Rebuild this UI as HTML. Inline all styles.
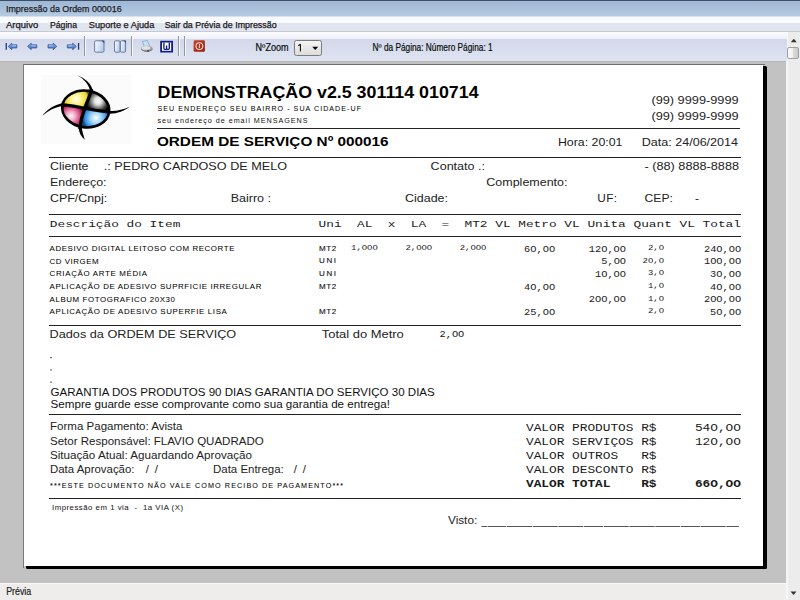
<!DOCTYPE html><html><head><meta charset="utf-8"><title>Impressão da Ordem 000016</title>
<style>html,body{margin:0;padding:0;width:800px;height:600px;overflow:hidden;background:#c0c0c0}svg{display:block}text{white-space:pre}</style></head><body>
<svg width="800" height="600" viewBox="0 0 800 600">
<defs>
<linearGradient id="gTitle" x1="0" y1="0" x2="0" y2="1"><stop offset="0" stop-color="#9db6d2"/><stop offset="1" stop-color="#b5cbe2"/></linearGradient>
<linearGradient id="gToolTop" x1="0" y1="0" x2="0" y2="1"><stop offset="0" stop-color="#fdfdfe"/><stop offset="1" stop-color="#eef0f8"/></linearGradient>
<linearGradient id="gMenu" x1="0" y1="0" x2="0" y2="1"><stop offset="0" stop-color="#fbfcfe"/><stop offset="1" stop-color="#e8edf5"/></linearGradient>
<linearGradient id="gTool" x1="0" y1="0" x2="0" y2="1"><stop offset="0" stop-color="#d2d8ea"/><stop offset="1" stop-color="#dfe4f2"/></linearGradient>
<linearGradient id="gThumb" x1="0" y1="0" x2="1" y2="0"><stop offset="0" stop-color="#fbfbfb"/><stop offset="0.45" stop-color="#f0f0f0"/><stop offset="0.55" stop-color="#dadada"/><stop offset="1" stop-color="#c8c8c8"/></linearGradient>
<linearGradient id="gCombo" x1="0" y1="0" x2="0" y2="1"><stop offset="0" stop-color="#f6f6f6"/><stop offset="1" stop-color="#dcdcdc"/></linearGradient>
<linearGradient id="gArrow" x1="0" y1="0" x2="0" y2="1"><stop offset="0" stop-color="#8fb5ea"/><stop offset="1" stop-color="#3c68b8"/></linearGradient>
<linearGradient id="gPage" x1="0" y1="0" x2="1" y2="1"><stop offset="0" stop-color="#ffffff"/><stop offset="1" stop-color="#c9dcf4"/></linearGradient>
<linearGradient id="gRed" x1="0" y1="0" x2="1" y2="1"><stop offset="0" stop-color="#d0462c"/><stop offset="1" stop-color="#8e1c0e"/></linearGradient>
<linearGradient id="gPage2" x1="0" y1="0" x2="1" y2="0.3"><stop offset="0" stop-color="#ffffff"/><stop offset="1" stop-color="#b3cdef"/></linearGradient>
</defs>
<rect x="0" y="0" width="800" height="16" fill="url(#gTitle)"/>
<rect x="0" y="0" width="800" height="1" fill="#3e4e66"/>
<rect x="0" y="16" width="800" height="1" fill="#d8e2ee"/>
<text x="6.00" y="12.00" font-family="Liberation Sans" font-size="9.3" font-weight="normal" fill="#18202e" textLength="115.60" lengthAdjust="spacingAndGlyphs" stroke="#222" stroke-width="0.25">Impressão da Ordem 000016</text>
<rect x="0" y="17" width="800" height="6" fill="#f9fafd"/>
<rect x="0" y="23" width="800" height="8" fill="#e1e5f0"/>
<rect x="0" y="31" width="800" height="1" fill="#c4c9d4"/>
<text x="6.00" y="28.00" font-family="Liberation Sans" font-size="9.0" font-weight="normal" fill="#151515" textLength="32.20" lengthAdjust="spacingAndGlyphs" stroke="#222" stroke-width="0.25">Arquivo</text>
<text x="50.00" y="28.00" font-family="Liberation Sans" font-size="9.0" font-weight="normal" fill="#151515" textLength="27.00" lengthAdjust="spacingAndGlyphs" stroke="#222" stroke-width="0.25">Página</text>
<text x="88.80" y="28.00" font-family="Liberation Sans" font-size="9.0" font-weight="normal" fill="#151515" textLength="65.50" lengthAdjust="spacingAndGlyphs" stroke="#222" stroke-width="0.25">Suporte e Ajuda</text>
<text x="164.70" y="28.00" font-family="Liberation Sans" font-size="9.0" font-weight="normal" fill="#151515" textLength="111.90" lengthAdjust="spacingAndGlyphs" stroke="#222" stroke-width="0.25">Sair da Prévia de Impressão</text>
<rect x="0" y="32" width="787" height="7" fill="url(#gToolTop)"/>
<rect x="0" y="39" width="787" height="22" fill="url(#gTool)"/>
<rect x="787" y="32" width="13" height="568" fill="#ececec"/>
<rect x="786" y="61" width="1" height="539" fill="#f4f4f4"/>
<rect x="787" y="32" width="1" height="568" fill="#f7f7f7"/>
<rect x="0" y="61" width="786" height="522" fill="#c2c2c2"/>
<rect x="0" y="61" width="786" height="1" fill="#b6b6b6"/>
<rect x="0" y="583" width="786" height="17" fill="#efedeb"/>
<rect x="0" y="583" width="786" height="1" fill="#fbfbfb"/>
<text x="6.20" y="595.30" font-family="Liberation Sans" font-size="10" font-weight="normal" fill="#222" textLength="25.00" lengthAdjust="spacingAndGlyphs" stroke="#222" stroke-width="0.2">Prévia</text>
<rect x="26" y="66" width="741" height="503" fill="#000" rx="1.5"/>
<rect x="23" y="64" width="742" height="1" fill="#6e6e6e"/>
<rect x="23" y="64" width="1" height="504" fill="#7a7a7a"/>
<rect x="24" y="65" width="739" height="501" fill="#ffffff"/>
<rect x="5.6" y="43" width="1.3" height="6.7" fill="#1f3570"/>
<polygon points="8.2,46.4 11.8,43.1 11.8,44.8 16.9,44.8 16.9,48.0 11.8,48.0 11.8,49.699999999999996" fill="url(#gArrow)" stroke="#2b4f9a" stroke-width="0.7" stroke-linejoin="round"/>
<rect x="12.100000000000001" y="45.4" width="3.8999999999999977" height="0.9" fill="#c9defa" opacity="0.8"/>
<polygon points="27.6,46.4 31.2,43.1 31.2,44.8 36.8,44.8 36.8,48.0 31.2,48.0 31.2,49.699999999999996" fill="url(#gArrow)" stroke="#2b4f9a" stroke-width="0.7" stroke-linejoin="round"/>
<rect x="31.5" y="45.4" width="4.399999999999998" height="0.9" fill="#c9defa" opacity="0.8"/>
<polygon points="56.8,46.4 53.2,43.1 53.2,44.8 48.0,44.8 48.0,48.0 53.2,48.0 53.2,49.699999999999996" fill="url(#gArrow)" stroke="#2b4f9a" stroke-width="0.7" stroke-linejoin="round"/>
<rect x="48.9" y="45.4" width="4.000000000000003" height="0.9" fill="#c9defa" opacity="0.8"/>
<polygon points="76.3,46.4 72.7,43.1 72.7,44.8 67.3,44.8 67.3,48.0 72.7,48.0 72.7,49.699999999999996" fill="url(#gArrow)" stroke="#2b4f9a" stroke-width="0.7" stroke-linejoin="round"/>
<rect x="68.2" y="45.4" width="4.2000000000000055" height="0.9" fill="#c9defa" opacity="0.8"/>
<rect x="77.9" y="43" width="1.3" height="6.7" fill="#1f3570"/>
<rect x="84" y="36" width="1" height="20" fill="#8e97a8"/>
<rect x="85" y="36" width="1" height="20" fill="#f8f9fc"/>
<rect x="131" y="36" width="1" height="20" fill="#8e97a8"/>
<rect x="132" y="36" width="1" height="20" fill="#f8f9fc"/>
<rect x="178" y="36" width="1" height="20" fill="#8e97a8"/>
<rect x="179" y="36" width="1" height="20" fill="#f8f9fc"/>
<rect x="184" y="36" width="1" height="20" fill="#8e97a8"/>
<rect x="185" y="36" width="1" height="20" fill="#f8f9fc"/>
<rect x="94.6" y="40.8" width="9.4" height="11.4" rx="1.3" fill="url(#gPage2)" stroke="#6b7a98" stroke-width="1"/>
<polygon points="101.3,40.4 104.4,40.4 104.4,43.5" fill="#3b4f7e"/>
<rect x="114.5" y="40.8" width="5.6" height="11.4" rx="1.2" fill="url(#gPage2)" stroke="#6b7a98" stroke-width="1"/>
<rect x="120.4" y="40.8" width="5.2" height="11.4" rx="1.2" fill="url(#gPage2)" stroke="#6b7a98" stroke-width="1"/>
<polygon points="123.3,40.4 126,40.4 126,43.1" fill="#3b4f7e"/>
<path d="M142.3,41.4 L147.4,40.5 L149.8,46.3 L144.6,47.3 Z" fill="#c4e0f6" stroke="#7fa6cf" stroke-width="0.8"/>
<ellipse cx="146.8" cy="48.7" rx="5.9" ry="3.0" fill="#9c9c9c"/>
<ellipse cx="146.0" cy="47.9" rx="4.5" ry="1.9" fill="#e2e2e2"/>
<path d="M141.6,49.6 Q146.5,53.2 152.4,49.6" fill="none" stroke="#7d7d7d" stroke-width="1"/>
<rect x="147" y="50.2" width="2.2" height="1.3" fill="#444"/>
<rect x="160.2" y="40.8" width="12.8" height="11.7" fill="#101c8c"/>
<rect x="162.0" y="42.5" width="9.2" height="8.3" fill="#ffffff"/>
<path d="M163.9,42.6 V48.6 Q163.9,49.4 164.7,49.4 H165.9 Q166.6,49.4 166.6,48.6 V45.6 M166.6,48.6 Q166.6,49.4 167.3,49.4 H168.5 Q169.3,49.4 169.3,48.6 V42.6" fill="none" stroke="#101c8c" stroke-width="1.35"/>
<rect x="193.6" y="40.3" width="11.3" height="11.5" rx="1.4" fill="url(#gRed)"/>
<circle cx="199.4" cy="46.1" r="3.4" fill="none" stroke="#f6d8d0" stroke-width="1.1"/>
<rect x="198.9" y="44.0" width="1" height="4.2" fill="#f6d8d0"/>
<text x="255.60" y="51.00" font-family="Liberation Sans" font-size="10" font-weight="normal" fill="#000" textLength="32.90" lengthAdjust="spacingAndGlyphs" stroke="#222" stroke-width="0.2">NºZoom</text>
<rect x="294.5" y="40.5" width="27" height="15" rx="2" fill="url(#gCombo)" stroke="#7b7b7b" stroke-width="1"/>
<path d="M300.4,44.0 V51.6 M300.4,44.2 L298.3,45.8" fill="none" stroke="#111" stroke-width="1.1"/>
<polygon points="312.3,46.8 318.2,46.8 315.25,50.1" fill="#000"/>
<text x="372.60" y="51.00" font-family="Liberation Sans" font-size="10" font-weight="normal" fill="#000" textLength="120.00" lengthAdjust="spacingAndGlyphs" stroke="#222" stroke-width="0.2">Nº da Página: Número Página: 1</text>
<polygon points="790.8,42.2 796.8,42.2 793.8,38.8" fill="#333"/>
<rect x="787.5" y="47.5" width="11" height="11" rx="1.5" fill="url(#gThumb)" stroke="#a0a0a0" stroke-width="1"/>
<polygon points="790.5,591.5 796.5,591.5 793.5,595" fill="#333"/>
<rect x="41" y="75" width="90" height="69" fill="#fbfbfb"/>
<defs>
<clipPath id="ell"><ellipse cx="85.7" cy="109" rx="23.6" ry="18.3" transform="rotate(8 85.7 109)"/></clipPath>
<radialGradient id="qY" gradientUnits="userSpaceOnUse" cx="76" cy="99" r="13"><stop offset="0" stop-color="#fffef0"/><stop offset="0.4" stop-color="#fbf290"/><stop offset="0.85" stop-color="#ecd830"/><stop offset="1" stop-color="#8a7a10"/></radialGradient>
<radialGradient id="qK" gradientUnits="userSpaceOnUse" cx="98" cy="101" r="12"><stop offset="0" stop-color="#ffffff"/><stop offset="0.3" stop-color="#e0e0e0"/><stop offset="0.75" stop-color="#444"/><stop offset="1" stop-color="#000"/></radialGradient>
<radialGradient id="qM" gradientUnits="userSpaceOnUse" cx="71" cy="116" r="12"><stop offset="0" stop-color="#fff8fb"/><stop offset="0.35" stop-color="#f2b0cc"/><stop offset="0.85" stop-color="#cc2c6a"/><stop offset="1" stop-color="#6a1030"/></radialGradient>
<radialGradient id="qC" gradientUnits="userSpaceOnUse" cx="96" cy="118" r="13"><stop offset="0" stop-color="#f8fdff"/><stop offset="0.4" stop-color="#a8d8fa"/><stop offset="0.85" stop-color="#2f90e4"/><stop offset="1" stop-color="#15508a"/></radialGradient>
</defs>
<g clip-path="url(#ell)">
<path d="M84.6,108.3 L91,89 L93,60 L40,60 L40,104 L61,105 Z" fill="url(#qY)"/>
<path d="M84.6,108.3 L91,89 L93,60 L140,60 L140,112 L110.5,112 Z" fill="url(#qK)"/>
<path d="M84.6,108.3 L110.5,112 L140,112 L140,150 L78,150 L79.5,129 Z" fill="url(#qC)"/>
<path d="M84.6,108.3 L79.5,129 L78,150 L40,150 L40,104 L61,105 Z" fill="url(#qM)"/>
</g>
<ellipse cx="85.7" cy="109" rx="23.6" ry="18.3" transform="rotate(8 85.7 109)" fill="none" stroke="#000" stroke-width="2.6"/>
<path d="M91.5,89 C90,96 86.5,103 84.6,108.3 C82.5,114 80.5,121 79.8,129" fill="none" stroke="#000" stroke-width="3.3"/>
<path d="M61.5,104.6 C70,105.5 78,106.8 84.6,108.3 C92,110 101,111.2 110.2,112.2" fill="none" stroke="#000" stroke-width="3.1"/>
<path d="M77.2,75.3 C84.5,78.2 91.5,83 92.8,91 L90.2,91.5 C89,84.5 84,79 77.2,75.3 Z" fill="#000"/>
<path d="M42.3,115.8 C47,109.5 54,104.8 62.5,103.2 L62.8,106 C55,107 48.5,110.5 42.3,115.8 Z" fill="#000"/>
<path d="M129.6,106.8 C124.5,110.8 117.5,113.6 109.8,113.8 L109.6,111 C116.8,111.4 123.5,109.5 129.6,106.8 Z" fill="#000"/>
<path d="M78.5,127.5 C79,132.5 81,136.8 84.8,139.8 C83.8,135.8 82.2,131.5 81.6,127.2 Z" fill="#000"/>

<text x="157.50" y="98.00" font-family="Liberation Sans" font-size="16.8" font-weight="bold" fill="#000" textLength="321.10" lengthAdjust="spacingAndGlyphs">DEMONSTRAÇÃO v2.5 301114 010714</text>
<text x="157.50" y="110.50" font-family="Liberation Sans" font-size="7.1" font-weight="normal" fill="#000" textLength="203.50" lengthAdjust="spacing" stroke="#000" stroke-width="0.03">SEU ENDEREÇO SEU BAIRRO - SUA CIDADE-UF</text>
<text x="157.50" y="123.00" font-family="Liberation Sans" font-size="7.2" font-weight="normal" fill="#111" textLength="150.00" lengthAdjust="spacing">seu endereço de email MENSAGENS</text>
<text x="651.40" y="104.30" font-family="Liberation Sans" font-size="11.8" font-weight="normal" fill="#222" textLength="87.20" lengthAdjust="spacingAndGlyphs">(99) 9999-9999</text>
<text x="651.40" y="120.00" font-family="Liberation Sans" font-size="11.8" font-weight="normal" fill="#222" textLength="87.20" lengthAdjust="spacingAndGlyphs">(99) 9999-9999</text>
<rect x="157" y="128" width="583" height="1" fill="#222"/>
<text x="156.90" y="146.00" font-family="Liberation Sans" font-size="13.2" font-weight="bold" fill="#000" textLength="231.70" lengthAdjust="spacingAndGlyphs">ORDEM DE SERVIÇO Nº 000016</text>
<text x="557.90" y="146.00" font-family="Liberation Sans" font-size="11.8" font-weight="normal" fill="#222" textLength="64.60" lengthAdjust="spacingAndGlyphs">Hora: 20:01</text>
<text x="641.80" y="146.00" font-family="Liberation Sans" font-size="11.8" font-weight="normal" fill="#222" textLength="96.20" lengthAdjust="spacingAndGlyphs">Data: 24/06/2014</text>
<rect x="49" y="157" width="692" height="1" fill="#222"/>
<text x="50.00" y="170.20" font-family="Liberation Sans" font-size="11.8" font-weight="normal" fill="#222" textLength="38.50" lengthAdjust="spacingAndGlyphs">Cliente</text>
<text x="103.80" y="170.20" font-family="Liberation Sans" font-size="11.8" font-weight="normal" fill="#222" textLength="183.20" lengthAdjust="spacingAndGlyphs">.: PEDRO CARDOSO DE MELO</text>
<text x="430.60" y="170.20" font-family="Liberation Sans" font-size="11.8" font-weight="normal" fill="#222" textLength="54.40" lengthAdjust="spacingAndGlyphs">Contato .:</text>
<text x="644.50" y="170.20" font-family="Liberation Sans" font-size="11.8" font-weight="normal" fill="#222" textLength="94.50" lengthAdjust="spacingAndGlyphs">- (88) 8888-8888</text>
<text x="50.00" y="186.00" font-family="Liberation Sans" font-size="11.8" font-weight="normal" fill="#222" textLength="56.50" lengthAdjust="spacingAndGlyphs">Endereço:</text>
<text x="486.30" y="186.00" font-family="Liberation Sans" font-size="11.8" font-weight="normal" fill="#222" textLength="81.20" lengthAdjust="spacingAndGlyphs">Complemento:</text>
<text x="50.00" y="202.40" font-family="Liberation Sans" font-size="11.8" font-weight="normal" fill="#222" textLength="57.20" lengthAdjust="spacingAndGlyphs">CPF/Cnpj:</text>
<text x="230.70" y="202.40" font-family="Liberation Sans" font-size="11.8" font-weight="normal" fill="#222" textLength="40.30" lengthAdjust="spacingAndGlyphs">Bairro :</text>
<text x="405.00" y="202.40" font-family="Liberation Sans" font-size="11.8" font-weight="normal" fill="#222" textLength="43.00" lengthAdjust="spacingAndGlyphs">Cidade:</text>
<text x="597.30" y="202.40" font-family="Liberation Sans" font-size="11.8" font-weight="normal" fill="#222" textLength="19.70" lengthAdjust="spacing">UF:</text>
<text x="644.50" y="202.40" font-family="Liberation Sans" font-size="11.8" font-weight="normal" fill="#222" textLength="28.50" lengthAdjust="spacingAndGlyphs">CEP:</text>
<text x="695.00" y="202.40" font-family="Liberation Sans" font-size="11.8" font-weight="normal" fill="#222" textLength="5.00" lengthAdjust="spacing">-</text>
<rect x="49" y="214" width="692" height="1" fill="#222"/>
<text x="49.80" y="227.40" font-family="Liberation Mono" font-size="9.7" font-weight="normal" fill="#1a1a1a" textLength="69.12" lengthAdjust="spacingAndGlyphs">Descrição</text>
<text x="126.60" y="227.40" font-family="Liberation Mono" font-size="9.7" font-weight="normal" fill="#1a1a1a" textLength="15.36" lengthAdjust="spacingAndGlyphs">do</text>
<text x="149.64" y="227.40" font-family="Liberation Mono" font-size="9.7" font-weight="normal" fill="#1a1a1a" textLength="30.72" lengthAdjust="spacingAndGlyphs">Item</text>
<text x="318.60" y="227.40" font-family="Liberation Mono" font-size="9.7" font-weight="normal" fill="#1a1a1a" textLength="23.04" lengthAdjust="spacingAndGlyphs">Uni</text>
<text x="357.00" y="227.40" font-family="Liberation Mono" font-size="9.7" font-weight="normal" fill="#1a1a1a" textLength="15.36" lengthAdjust="spacingAndGlyphs">AL</text>
<text x="387.72" y="227.40" font-family="Liberation Mono" font-size="9.7" font-weight="normal" fill="#1a1a1a" textLength="7.68" lengthAdjust="spacingAndGlyphs">x</text>
<text x="410.76" y="227.40" font-family="Liberation Mono" font-size="9.7" font-weight="normal" fill="#1a1a1a" textLength="15.36" lengthAdjust="spacingAndGlyphs">LA</text>
<text x="441.48" y="227.40" font-family="Liberation Mono" font-size="9.7" font-weight="normal" fill="#1a1a1a" textLength="7.68" lengthAdjust="spacingAndGlyphs">=</text>
<text x="464.52" y="227.40" font-family="Liberation Mono" font-size="9.7" font-weight="normal" fill="#1a1a1a" textLength="23.04" lengthAdjust="spacingAndGlyphs">MT2</text>
<text x="495.24" y="227.40" font-family="Liberation Mono" font-size="9.7" font-weight="normal" fill="#1a1a1a" textLength="15.36" lengthAdjust="spacingAndGlyphs">VL</text>
<text x="518.28" y="227.40" font-family="Liberation Mono" font-size="9.7" font-weight="normal" fill="#1a1a1a" textLength="38.40" lengthAdjust="spacingAndGlyphs">Metro</text>
<text x="564.36" y="227.40" font-family="Liberation Mono" font-size="9.7" font-weight="normal" fill="#1a1a1a" textLength="15.36" lengthAdjust="spacingAndGlyphs">VL</text>
<text x="587.40" y="227.40" font-family="Liberation Mono" font-size="9.7" font-weight="normal" fill="#1a1a1a" textLength="38.40" lengthAdjust="spacingAndGlyphs">Unita</text>
<text x="633.48" y="227.40" font-family="Liberation Mono" font-size="9.7" font-weight="normal" fill="#1a1a1a" textLength="38.40" lengthAdjust="spacingAndGlyphs">Quant</text>
<text x="679.56" y="227.40" font-family="Liberation Mono" font-size="9.7" font-weight="normal" fill="#1a1a1a" textLength="15.36" lengthAdjust="spacingAndGlyphs">VL</text>
<text x="702.60" y="227.40" font-family="Liberation Mono" font-size="9.7" font-weight="normal" fill="#1a1a1a" textLength="38.40" lengthAdjust="spacingAndGlyphs">Total</text>
<rect x="49" y="236" width="692" height="1" fill="#222"/>
<text x="49.60" y="251.20" font-family="Liberation Sans" font-size="7.9" font-weight="normal" fill="#000" textLength="184.80" lengthAdjust="spacing" stroke="#000" stroke-width="0.04">ADESIVO DIGITAL LEITOSO COM RECORTE</text>
<text x="319.00" y="250.80" font-family="Liberation Sans" font-size="8.0" font-weight="normal" fill="#111" textLength="17.10" lengthAdjust="spacing" stroke="#111" stroke-width="0.12">MT2</text>
<text x="351.09" y="250.00" font-family="Liberation Mono" font-size="6.8" font-weight="normal" fill="#1a1a1a" textLength="26.75" lengthAdjust="spacingAndGlyphs">1,OOO</text>
<text x="405.49" y="250.00" font-family="Liberation Mono" font-size="6.8" font-weight="normal" fill="#1a1a1a" textLength="26.75" lengthAdjust="spacingAndGlyphs">2,OOO</text>
<text x="459.69" y="250.00" font-family="Liberation Mono" font-size="6.8" font-weight="normal" fill="#1a1a1a" textLength="26.75" lengthAdjust="spacingAndGlyphs">2,OOO</text>
<text x="524.14" y="251.80" font-family="Liberation Mono" font-size="8.4" font-weight="normal" fill="#222" textLength="31.00" lengthAdjust="spacingAndGlyphs">6O,OO</text>
<text x="588.84" y="251.80" font-family="Liberation Mono" font-size="8.4" font-weight="normal" fill="#222" textLength="37.20" lengthAdjust="spacingAndGlyphs">12O,OO</text>
<text x="647.99" y="250.00" font-family="Liberation Mono" font-size="6.8" font-weight="normal" fill="#1a1a1a" textLength="16.05" lengthAdjust="spacingAndGlyphs">2,O</text>
<text x="703.94" y="251.80" font-family="Liberation Mono" font-size="8.4" font-weight="normal" fill="#222" textLength="37.20" lengthAdjust="spacingAndGlyphs">24O,OO</text>
<text x="49.60" y="263.80" font-family="Liberation Sans" font-size="7.9" font-weight="normal" fill="#000" textLength="48.90" lengthAdjust="spacing" stroke="#000" stroke-width="0.04">CD VIRGEM</text>
<text x="319.00" y="263.40" font-family="Liberation Sans" font-size="8.0" font-weight="normal" fill="#111" textLength="17.10" lengthAdjust="spacing" stroke="#111" stroke-width="0.12">UNI</text>
<text x="601.24" y="264.45" font-family="Liberation Mono" font-size="8.4" font-weight="normal" fill="#222" textLength="24.80" lengthAdjust="spacingAndGlyphs">5,OO</text>
<text x="642.64" y="262.65" font-family="Liberation Mono" font-size="6.8" font-weight="normal" fill="#1a1a1a" textLength="21.40" lengthAdjust="spacingAndGlyphs">2O,O</text>
<text x="703.94" y="264.45" font-family="Liberation Mono" font-size="8.4" font-weight="normal" fill="#222" textLength="37.20" lengthAdjust="spacingAndGlyphs">1OO,OO</text>
<text x="49.60" y="276.40" font-family="Liberation Sans" font-size="7.9" font-weight="normal" fill="#000" textLength="97.40" lengthAdjust="spacing" stroke="#000" stroke-width="0.04">CRIAÇÃO ARTE MÉDIA</text>
<text x="319.00" y="276.00" font-family="Liberation Sans" font-size="8.0" font-weight="normal" fill="#111" textLength="17.10" lengthAdjust="spacing" stroke="#111" stroke-width="0.12">UNI</text>
<text x="595.04" y="277.10" font-family="Liberation Mono" font-size="8.4" font-weight="normal" fill="#222" textLength="31.00" lengthAdjust="spacingAndGlyphs">1O,OO</text>
<text x="647.99" y="275.30" font-family="Liberation Mono" font-size="6.8" font-weight="normal" fill="#1a1a1a" textLength="16.05" lengthAdjust="spacingAndGlyphs">3,O</text>
<text x="710.14" y="277.10" font-family="Liberation Mono" font-size="8.4" font-weight="normal" fill="#222" textLength="31.00" lengthAdjust="spacingAndGlyphs">3O,OO</text>
<text x="49.60" y="289.00" font-family="Liberation Sans" font-size="7.9" font-weight="normal" fill="#000" textLength="211.80" lengthAdjust="spacing" stroke="#000" stroke-width="0.04">APLICAÇÃO DE ADESIVO SUPRFICIE IRREGULAR</text>
<text x="319.00" y="288.60" font-family="Liberation Sans" font-size="8.0" font-weight="normal" fill="#111" textLength="17.10" lengthAdjust="spacing" stroke="#111" stroke-width="0.12">MT2</text>
<text x="524.14" y="289.75" font-family="Liberation Mono" font-size="8.4" font-weight="normal" fill="#222" textLength="31.00" lengthAdjust="spacingAndGlyphs">4O,OO</text>
<text x="647.99" y="287.95" font-family="Liberation Mono" font-size="6.8" font-weight="normal" fill="#1a1a1a" textLength="16.05" lengthAdjust="spacingAndGlyphs">1,O</text>
<text x="710.14" y="289.75" font-family="Liberation Mono" font-size="8.4" font-weight="normal" fill="#222" textLength="31.00" lengthAdjust="spacingAndGlyphs">4O,OO</text>
<text x="49.60" y="301.60" font-family="Liberation Sans" font-size="7.9" font-weight="normal" fill="#000" textLength="125.40" lengthAdjust="spacing" stroke="#000" stroke-width="0.04">ALBUM FOTOGRAFICO 20X30</text>
<text x="588.84" y="302.40" font-family="Liberation Mono" font-size="8.4" font-weight="normal" fill="#222" textLength="37.20" lengthAdjust="spacingAndGlyphs">2OO,OO</text>
<text x="647.99" y="300.60" font-family="Liberation Mono" font-size="6.8" font-weight="normal" fill="#1a1a1a" textLength="16.05" lengthAdjust="spacingAndGlyphs">1,O</text>
<text x="703.94" y="302.40" font-family="Liberation Mono" font-size="8.4" font-weight="normal" fill="#222" textLength="37.20" lengthAdjust="spacingAndGlyphs">2OO,OO</text>
<text x="49.60" y="314.20" font-family="Liberation Sans" font-size="7.9" font-weight="normal" fill="#000" textLength="177.20" lengthAdjust="spacing" stroke="#000" stroke-width="0.04">APLICAÇÃO DE ADESIVO SUPERFIE LISA</text>
<text x="319.00" y="313.80" font-family="Liberation Sans" font-size="8.0" font-weight="normal" fill="#111" textLength="17.10" lengthAdjust="spacing" stroke="#111" stroke-width="0.12">MT2</text>
<text x="524.14" y="315.05" font-family="Liberation Mono" font-size="8.4" font-weight="normal" fill="#222" textLength="31.00" lengthAdjust="spacingAndGlyphs">25,OO</text>
<text x="647.99" y="313.25" font-family="Liberation Mono" font-size="6.8" font-weight="normal" fill="#1a1a1a" textLength="16.05" lengthAdjust="spacingAndGlyphs">2,O</text>
<text x="710.14" y="315.05" font-family="Liberation Mono" font-size="8.4" font-weight="normal" fill="#222" textLength="31.00" lengthAdjust="spacingAndGlyphs">5O,OO</text>
<rect x="49" y="325" width="692" height="1" fill="#222"/>
<text x="49.60" y="338.40" font-family="Liberation Sans" font-size="11.8" font-weight="normal" fill="#222" textLength="186.60" lengthAdjust="spacingAndGlyphs">Dados da ORDEM DE SERVIÇO</text>
<text x="321.75" y="338.40" font-family="Liberation Sans" font-size="11.8" font-weight="normal" fill="#222" textLength="82.05" lengthAdjust="spacingAndGlyphs">Total do Metro</text>
<text x="439.54" y="337.00" font-family="Liberation Mono" font-size="8.8" font-weight="normal" fill="#1a1a1a" textLength="24.80" lengthAdjust="spacingAndGlyphs">2,OO</text>
<rect x="50.3" y="357" width="1.5" height="1.2" fill="#444"/>
<rect x="50.3" y="369.3" width="1.5" height="1.2" fill="#444"/>
<rect x="50.3" y="381.6" width="1.5" height="1.2" fill="#444"/>
<text x="50.50" y="396.00" font-family="Liberation Sans" font-size="11.4" font-weight="normal" fill="#111" textLength="384.25" lengthAdjust="spacingAndGlyphs">GARANTIA DOS PRODUTOS 90 DIAS GARANTIA DO SERVIÇO 30 DIAS</text>
<text x="50.50" y="408.40" font-family="Liberation Sans" font-size="11.4" font-weight="normal" fill="#111" textLength="339.50" lengthAdjust="spacingAndGlyphs">Sempre guarde esse comprovante como sua garantia de entrega!</text>
<rect x="49" y="414" width="692" height="1" fill="#222"/>
<text x="50.00" y="430.40" font-family="Liberation Sans" font-size="11.4" font-weight="normal" fill="#222" textLength="132.50" lengthAdjust="spacingAndGlyphs">Forma Pagamento: Avista</text>
<text x="50.00" y="445.00" font-family="Liberation Sans" font-size="11.4" font-weight="normal" fill="#222" textLength="213.75" lengthAdjust="spacingAndGlyphs">Setor Responsável: FLAVIO QUADRADO</text>
<text x="50.00" y="459.00" font-family="Liberation Sans" font-size="11.4" font-weight="normal" fill="#222" textLength="202.00" lengthAdjust="spacingAndGlyphs">Situação Atual: Aguardando Aprovação</text>
<text x="50.00" y="473.00" font-family="Liberation Sans" font-size="11.4" font-weight="normal" fill="#222" textLength="84.50" lengthAdjust="spacingAndGlyphs">Data Aprovação:</text>
<text x="145.80" y="473.00" font-family="Liberation Sans" font-size="11.4" font-weight="normal" fill="#222" textLength="12.20" lengthAdjust="spacing">/ /</text>
<text x="213.00" y="473.00" font-family="Liberation Sans" font-size="11.4" font-weight="normal" fill="#222" textLength="70.75" lengthAdjust="spacingAndGlyphs">Data Entrega:</text>
<text x="293.75" y="473.00" font-family="Liberation Sans" font-size="11.4" font-weight="normal" fill="#222" textLength="12.25" lengthAdjust="spacing">/ /</text>
<text x="50.00" y="488.00" font-family="Liberation Sans" font-size="7.2" font-weight="normal" fill="#000" textLength="293.00" lengthAdjust="spacing" stroke="#000" stroke-width="0.05">***ESTE DOCUMENTO NÃO VALE COMO RECIBO DE PAGAMENTO***</text>
<text x="525.96" y="430.60" font-family="Liberation Mono" font-size="10.3" font-weight="normal" fill="#1a1a1a" textLength="38.40" lengthAdjust="spacingAndGlyphs">VALOR</text>
<text x="572.04" y="430.60" font-family="Liberation Mono" font-size="10.3" font-weight="normal" fill="#1a1a1a" textLength="61.44" lengthAdjust="spacingAndGlyphs">PRODUTOS</text>
<text x="641.16" y="430.60" font-family="Liberation Mono" font-size="10.3" font-weight="normal" fill="#1a1a1a" textLength="15.36" lengthAdjust="spacingAndGlyphs">R$</text>
<text x="694.92" y="430.60" font-family="Liberation Mono" font-size="10.3" font-weight="normal" fill="#1a1a1a" textLength="46.08" lengthAdjust="spacingAndGlyphs">54O,OO</text>
<text x="525.96" y="444.80" font-family="Liberation Mono" font-size="10.3" font-weight="normal" fill="#1a1a1a" textLength="38.40" lengthAdjust="spacingAndGlyphs">VALOR</text>
<text x="572.04" y="444.80" font-family="Liberation Mono" font-size="10.3" font-weight="normal" fill="#1a1a1a" textLength="61.44" lengthAdjust="spacingAndGlyphs">SERVIÇOS</text>
<text x="641.16" y="444.80" font-family="Liberation Mono" font-size="10.3" font-weight="normal" fill="#1a1a1a" textLength="15.36" lengthAdjust="spacingAndGlyphs">R$</text>
<text x="694.92" y="444.80" font-family="Liberation Mono" font-size="10.3" font-weight="normal" fill="#1a1a1a" textLength="46.08" lengthAdjust="spacingAndGlyphs">12O,OO</text>
<text x="525.96" y="458.80" font-family="Liberation Mono" font-size="10.3" font-weight="normal" fill="#1a1a1a" textLength="38.40" lengthAdjust="spacingAndGlyphs">VALOR</text>
<text x="572.04" y="458.80" font-family="Liberation Mono" font-size="10.3" font-weight="normal" fill="#1a1a1a" textLength="46.08" lengthAdjust="spacingAndGlyphs">OUTROS</text>
<text x="641.16" y="458.80" font-family="Liberation Mono" font-size="10.3" font-weight="normal" fill="#1a1a1a" textLength="15.36" lengthAdjust="spacingAndGlyphs">R$</text>
<text x="525.96" y="472.80" font-family="Liberation Mono" font-size="10.3" font-weight="normal" fill="#1a1a1a" textLength="38.40" lengthAdjust="spacingAndGlyphs">VALOR</text>
<text x="572.04" y="472.80" font-family="Liberation Mono" font-size="10.3" font-weight="normal" fill="#1a1a1a" textLength="61.44" lengthAdjust="spacingAndGlyphs">DESCONTO</text>
<text x="641.16" y="472.80" font-family="Liberation Mono" font-size="10.3" font-weight="normal" fill="#1a1a1a" textLength="15.36" lengthAdjust="spacingAndGlyphs">R$</text>
<text x="525.96" y="487.00" font-family="Liberation Mono" font-size="10.3" font-weight="bold" fill="#1a1a1a" textLength="38.40" lengthAdjust="spacingAndGlyphs">VALOR</text>
<text x="572.04" y="487.00" font-family="Liberation Mono" font-size="10.3" font-weight="bold" fill="#1a1a1a" textLength="38.40" lengthAdjust="spacingAndGlyphs">TOTAL</text>
<text x="641.16" y="487.00" font-family="Liberation Mono" font-size="10.3" font-weight="bold" fill="#1a1a1a" textLength="15.36" lengthAdjust="spacingAndGlyphs">R$</text>
<text x="694.92" y="487.00" font-family="Liberation Mono" font-size="10.3" font-weight="bold" fill="#1a1a1a" textLength="46.08" lengthAdjust="spacingAndGlyphs">66O,OO</text>
<rect x="49" y="498" width="692" height="1" fill="#222"/>
<text x="52.00" y="510.00" font-family="Liberation Sans" font-size="7.8" font-weight="normal" fill="#111" textLength="131.00" lengthAdjust="spacing">Impressão em 1 via  -  1a VIA (X)</text>
<text x="448.00" y="524.00" font-family="Liberation Sans" font-size="11.4" font-weight="normal" fill="#222" textLength="29.20" lengthAdjust="spacingAndGlyphs">Visto:</text>
<rect x="481.40" y="526" width="5.55" height="1" fill="#555"/>
<rect x="487.65" y="526" width="18.30" height="1" fill="#555"/>
<rect x="506.65" y="526" width="25.30" height="1" fill="#555"/>
<rect x="532.65" y="526" width="25.15" height="1" fill="#555"/>
<rect x="558.50" y="526" width="24.80" height="1" fill="#555"/>
<rect x="584.00" y="526" width="19.00" height="1" fill="#555"/>
<rect x="603.70" y="526" width="25.10" height="1" fill="#555"/>
<rect x="629.50" y="526" width="25.10" height="1" fill="#555"/>
<rect x="655.30" y="526" width="24.90" height="1" fill="#555"/>
<rect x="680.90" y="526" width="19.00" height="1" fill="#555"/>
<rect x="700.60" y="526" width="25.10" height="1" fill="#555"/>
<rect x="726.40" y="526" width="12.50" height="1" fill="#555"/>
</svg></body></html>
